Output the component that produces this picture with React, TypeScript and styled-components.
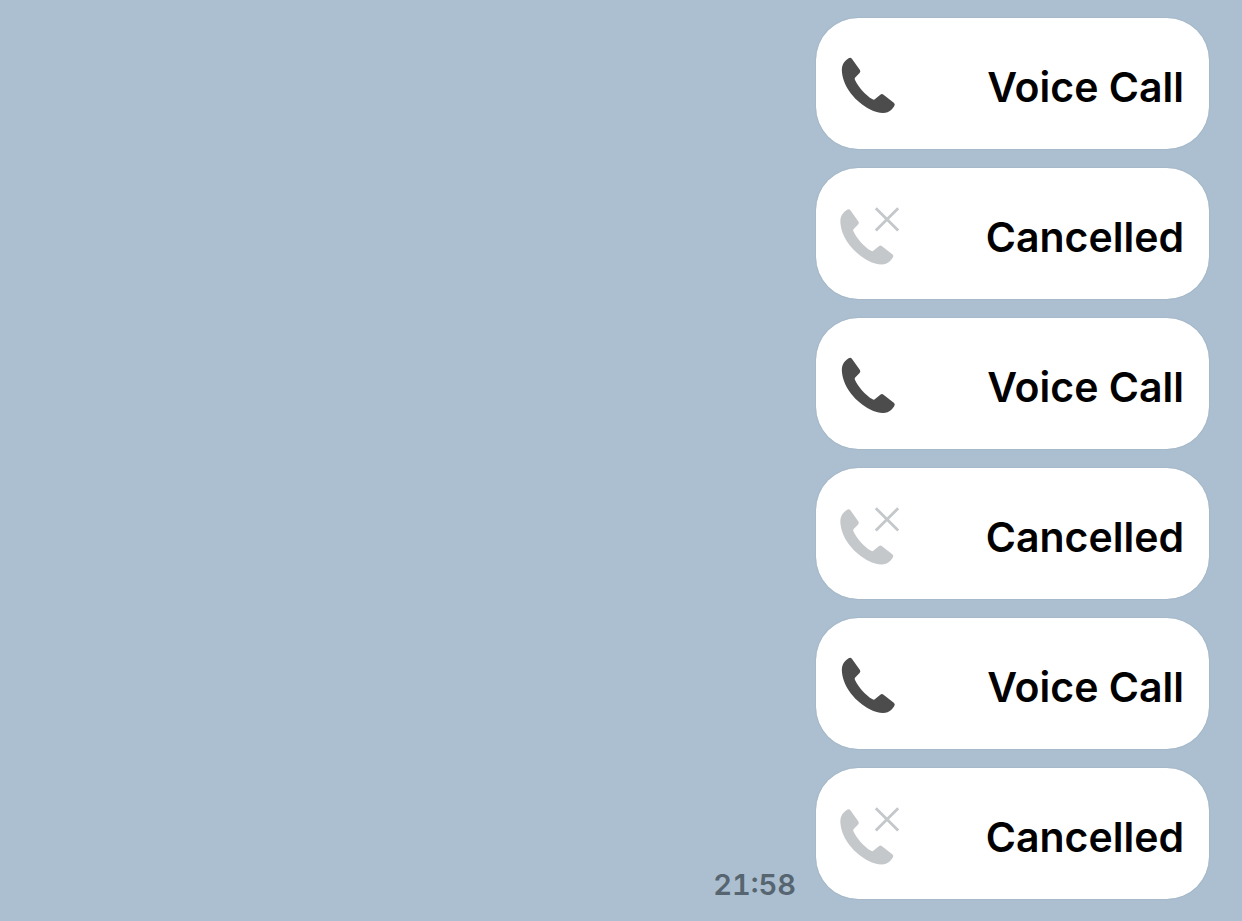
import React from "react";
import styled, { createGlobalStyle } from "styled-components";

const GlobalStyle = createGlobalStyle`
  *, *::before, *::after { box-sizing: border-box; }
  body {
    margin: 0;
    background: #abbfd0;
    font-family: Inter, "Liberation Sans", sans-serif;
  }
`;

const Chat = styled.main`
  display: flex;
  justify-content: flex-end;
  align-items: flex-end;
  gap: 20px;
  padding: 18px 33px 22px 20px;
`;

const Time = styled.time`
  color: #566570;
  font-size: 29px;
  font-weight: 600;
  line-height: 28px;
  font-variant-numeric: tabular-nums;
`;

const CallList = styled.ul`
  display: flex;
  flex-direction: column;
  gap: 19px;
  width: 393px;
  max-width: 100%;
  margin: 0;
  padding: 0;
  list-style: none;
`;

const Bubble = styled.li`
  display: flex;
  align-items: center;
  justify-content: space-between;
  min-height: 131px;
  padding: 6px 25px 0 16px;
  border-radius: 42px;
  background: #ffffff;
  box-shadow: 0 0 1px rgba(60, 85, 110, 0.5);
`;

const Label = styled.span`
  color: #000000;
  font-size: 41px;
  font-weight: 600;
  line-height: 52px;
`;

const Icon = styled.svg<{ $muted: boolean }>`
  flex: none;
  color: ${({ $muted }) => ($muted ? "#c4c8cb" : "#4c4c4c")};
`;

const HANDSET =
  "M16.6 10.3Q18.5 8.8 19.9 10.8L27.9 22Q28.9 23.6 27.6 25L23.2 29.4Q22.3 30.5 22.9 31.7C26.2 39 33.5 47.2 40.6 51.3Q42 52.1 43.1 51.1L48.3 46.7Q49.9 45.5 51.5 46.7L61.8 54.8Q63.6 56.2 62.2 58.2C60.3 60.9 58.1 63.2 55.5 64.2C51 65.9 44 64.4 38.2 61.4C23.5 53.9 11.5 39.5 10 24.5C9.4 18 10.8 14.3 16.6 10.3Z";

function CallIcon({ cancelled }: { cancelled: boolean }) {
  return (
    <Icon $muted={cancelled} width="76" height="76" viewBox="0 1 76 76" aria-hidden="true">
      <path d={HANDSET} fill="currentColor" transform={cancelled ? "translate(-1.5 1.5)" : undefined} />
      {cancelled && (
        <path d="M43.8 10.2L66.2 32.6M66.2 10.2L43.8 32.6" stroke="currentColor" strokeWidth="2.8" fill="none" />
      )}
    </Icon>
  );
}

const calls = [false, true, false, true, false, true];

export default function App() {
  return (
    <>
      <GlobalStyle />
      <Chat>
        <Time>21:58</Time>
        <CallList>
          {calls.map((cancelled, i) => (
            <Bubble key={i}>
              <CallIcon cancelled={cancelled} />
              <Label>{cancelled ? "Cancelled" : "Voice Call"}</Label>
            </Bubble>
          ))}
        </CallList>
      </Chat>
    </>
  );
}
